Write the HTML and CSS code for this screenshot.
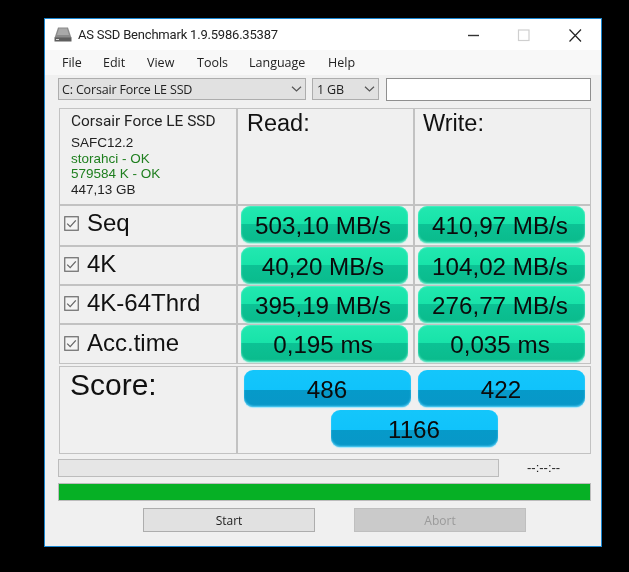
FILE: index.html
```
<!DOCTYPE html>
<html lang="en">
<head>
<meta charset="utf-8">
<title>AS SSD Benchmark</title>
<link rel="stylesheet" href="styles.css">
</head>
<body>
<div class="window">
  <header class="titlebar">
    <svg class="app-icon" width="18" height="15" viewBox="0 0 18 15">
      <path d="M4 0.5H14L17.5 11H0.5Z" fill="#8b8b8b"/>
      <path d="M5 1.5H13L15 8H3Z" fill="#a9a9a9"/>
      <rect x="0.5" y="10.5" width="17" height="4" fill="#5f5f5f"/>
      <rect x="2" y="12" width="3" height="1" fill="#d8d8d8"/>
    </svg>
    <span class="title">AS SSD Benchmark 1.9.5986.35387</span>
    <div class="controls">
      <svg class="ctl" width="46" height="30" viewBox="0 0 46 30"><path d="M18 15.5H29" stroke="#333" stroke-width="1.4"/></svg>
      <svg class="ctl" width="46" height="30" viewBox="0 0 46 30"><rect x="17.5" y="10" width="10.5" height="10.5" fill="none" stroke="#cfcfcf" stroke-width="1.2"/></svg>
      <svg class="ctl" width="46" height="30" viewBox="0 0 46 30"><path d="M17.5 9.5L29 21.5M29 9.5L17.5 21.5" stroke="#222" stroke-width="1.2"/></svg>
    </div>
  </header>
  <nav class="menubar">
    <span class="m-file">File</span><span class="m-edit">Edit</span><span class="m-view">View</span><span class="m-tools">Tools</span><span class="m-lang">Language</span><span>Help</span>
  </nav>
  <div class="content">
    <div class="toolbar">
      <div class="combo combo-drive"><span>C: Corsair Force LE SSD</span><svg width="11" height="6" viewBox="0 0 11 6"><path d="M1 0.8L5.5 5L10 0.8" fill="none" stroke="#555" stroke-width="1.2"/></svg></div>
      <div class="combo combo-size"><span>1 GB</span><svg width="11" height="6" viewBox="0 0 11 6"><path d="M1 0.8L5.5 5L10 0.8" fill="none" stroke="#555" stroke-width="1.2"/></svg></div>
      <div class="textbox"></div>
    </div>
    <div class="results">
      <div class="cell info">
        <div class="drive-name">Corsair Force LE SSD</div>
        <div class="info-line">SAFC12.2</div>
        <div class="info-line ok">storahci - OK</div>
        <div class="info-line ok">579584 K - OK</div>
        <div class="info-line">447,13 GB</div>
      </div>
      <div class="cell head head-read">Read:</div>
      <div class="cell head">Write:</div>

      <div class="cell label label-seq"><svg class="check" width="15" height="15" viewBox="0 0 15 15"><rect x="0.75" y="0.75" width="13.5" height="13.5" fill="#f4f4f4" stroke="#6a6a6a" stroke-width="1.2"/><path d="M3.2 7.6L6.2 10.6L11.8 4.4" fill="none" stroke="#666" stroke-width="1.3"/></svg><span>Seq</span></div>
      <div class="cell val"><div class="bar green">503,10 MB/s</div></div>
      <div class="cell val"><div class="bar green">410,97 MB/s</div></div>

      <div class="cell label"><svg class="check" width="15" height="15" viewBox="0 0 15 15"><rect x="0.75" y="0.75" width="13.5" height="13.5" fill="#f4f4f4" stroke="#6a6a6a" stroke-width="1.2"/><path d="M3.2 7.6L6.2 10.6L11.8 4.4" fill="none" stroke="#666" stroke-width="1.3"/></svg><span>4K</span></div>
      <div class="cell val"><div class="bar green">40,20 MB/s</div></div>
      <div class="cell val"><div class="bar green">104,02 MB/s</div></div>

      <div class="cell label"><svg class="check" width="15" height="15" viewBox="0 0 15 15"><rect x="0.75" y="0.75" width="13.5" height="13.5" fill="#f4f4f4" stroke="#6a6a6a" stroke-width="1.2"/><path d="M3.2 7.6L6.2 10.6L11.8 4.4" fill="none" stroke="#666" stroke-width="1.3"/></svg><span>4K-64Thrd</span></div>
      <div class="cell val"><div class="bar green">395,19 MB/s</div></div>
      <div class="cell val"><div class="bar green">276,77 MB/s</div></div>

      <div class="cell label"><svg class="check" width="15" height="15" viewBox="0 0 15 15"><rect x="0.75" y="0.75" width="13.5" height="13.5" fill="#f4f4f4" stroke="#6a6a6a" stroke-width="1.2"/><path d="M3.2 7.6L6.2 10.6L11.8 4.4" fill="none" stroke="#666" stroke-width="1.3"/></svg><span>Acc.time</span></div>
      <div class="cell val"><div class="bar green">0,195 ms</div></div>
      <div class="cell val"><div class="bar green">0,035 ms</div></div>
    </div>
    <div class="score">
      <div class="cell score-label">Score:</div>
      <div class="cell score-vals">
        <div class="bar blue">486</div>
        <div class="bar blue">422</div>
        <div class="bar blue total">1166</div>
      </div>
    </div>
    <div class="progress-row">
      <div class="progress"></div>
      <div class="time">--:--:--</div>
    </div>
    <div class="done"></div>
    <div class="buttons">
      <div class="btn">Start</div>
      <div class="btn disabled">Abort</div>
    </div>
  </div>
</div>
</body>
</html>
```

FILE: styles.css
```
* { box-sizing: border-box; }
html, body { margin: 0; height: 100%; }
body {
  width: 629px;
  height: 572px;
  overflow: hidden;
  background: #000;
  padding: 18px 27px 0 44px;
  font-family: "Liberation Sans", Arial, sans-serif;
  color: #111;
}
.window {
  width: 558px;
  height: 529px;
  border: 1px solid #1a86d0;
  background: #f0f0f0;
  display: flex;
  flex-direction: column;
  filter: blur(0.45px);
}
.titlebar {
  height: 31px;
  flex: none;
  background: #fff;
  display: flex;
  align-items: center;
  padding-left: 9px;
}
.app-icon { margin-right: 6px; }
.title { font: 13px Roboto, sans-serif; letter-spacing: -0.2px; color: #222; flex: 1; }
.controls { display: flex; margin-right: 3px; }
.ctl { margin-left: 5px; }
.menubar {
  height: 25px;
  flex: none;
  background: #f8f8f8;
  display: flex;
  align-items: center;
  padding-left: 17px;
  font: 12.5px "Open Sans", sans-serif;
  color: #222;
}
.m-file { width: 41px; }
.m-edit { width: 44px; }
.m-view { width: 50px; }
.m-tools { width: 52px; }
.m-lang { width: 79px; }
.content {
  flex: 1;
  padding: 3px 10px 0 13px;
  display: flex;
  flex-direction: column;
}
.toolbar { display: flex; height: 23px; }
.combo {
  height: 22px;
  background: #e1e1e1;
  border: 1px solid #adadad;
  display: flex;
  align-items: center;
  justify-content: space-between;
  padding: 0 3px;
  font: 12.5px "Open Sans", sans-serif;
  letter-spacing: -0.17px;
  color: #222;
}
.combo-drive { width: 248px; margin-right: 6px; }
.combo-size { width: 67px; margin-right: 7px; padding-left: 4px; }
.textbox {
  width: 205px;
  height: 23px;
  background: #fff;
  border: 1px solid #8f8f8f;
}
.results {
  margin: 7px 0 0 1px;
  display: grid;
  grid-template-columns: 178px 177px 177px;
  grid-template-rows: 97px 41px 39px 39px 40px;
  width: 532px;
}
.cell { border: 1px solid #c2c2c2; }
.info { padding: 3px 0 0 11px; color: #222; }
.drive-name { font: 15.4px Roboto, sans-serif; color: #222; line-height: 18px; margin-bottom: 5px; }
.info-line { font: 13.5px/15.6px "Liberation Sans", sans-serif; }
.ok { color: #1f7f1f; }
.head { font-size: 23.5px; padding: 0 0 0 8px; line-height: 28px; color: #111; }
.head-read { padding-left: 9px; }
.label {
  display: flex;
  align-items: center;
  padding: 0 0 3px 4px;
  font-size: 24px;
}
.label-seq { padding-bottom: 5px; }
.check { margin-right: 8px; margin-top: 1px; }
.val { padding: 0 5px 0 3px; }
.bar {
  border-radius: 9px;
  display: flex;
  align-items: center;
  justify-content: center;
  font-size: 24.2px;
  color: #0b0b0b;
  height: 37px;
}
.green {
  background: linear-gradient(#22e8b0 0, #18e3a9 48%, #0cc295 48%, #0abb8c 100%);
  box-shadow: inset 0 -1px 2px rgba(120, 245, 215, 0.9), inset 0 1px 1px rgba(120, 245, 215, 0.4), 0 1px 1px #a8f0dc;
  padding: 2px 3px 0 0;
}
.blue {
  width: 167px;
  background: linear-gradient(#14c6fb 0, #10c3fb 54%, #069ac9 54%, #0897c8 100%);
  box-shadow: inset 0 -1px 2px rgba(90, 210, 250, 0.95), 0 1px 1px #a5e7fb;
  padding: 3px 1px 0 0;
}
.score {
  margin: 2px 0 0 1px;
  display: grid;
  grid-template-columns: 178px 354px;
  width: 532px;
  height: 88px;
}
.score-label { font-size: 30px; padding: 0 0 0 10px; line-height: 36px; }
.score-vals {
  display: flex;
  flex-wrap: wrap;
  column-gap: 7px;
  row-gap: 3px;
  padding: 3px 0 0 6px;
  align-content: flex-start;
}
.total { margin-left: 87px; }
.progress-row { display: flex; margin-top: 5px; align-items: center; }
.progress {
  width: 441px;
  height: 18px;
  background: #e6e6e6;
  border: 1px solid #bcbcbc;
}
.time { margin: -2px 0 0 28px; font-size: 13px; color: #222; }
.done {
  margin-top: 6px;
  width: 533px;
  height: 18px;
  background: #06b025;
  border: 1px solid #bcbcbc;
}
.buttons { display: flex; margin: 7px 0 0 85px; gap: 39px; }
.btn {
  width: 172px;
  height: 24px;
  background: #e1e1e1;
  border: 1px solid #adadad;
  display: flex;
  align-items: center;
  justify-content: center;
  font: 12px "Open Sans", sans-serif;
  color: #222;
}
.btn.disabled { background: #cacaca; border-color: #bfbfbf; color: #9a9a9a; }
```
